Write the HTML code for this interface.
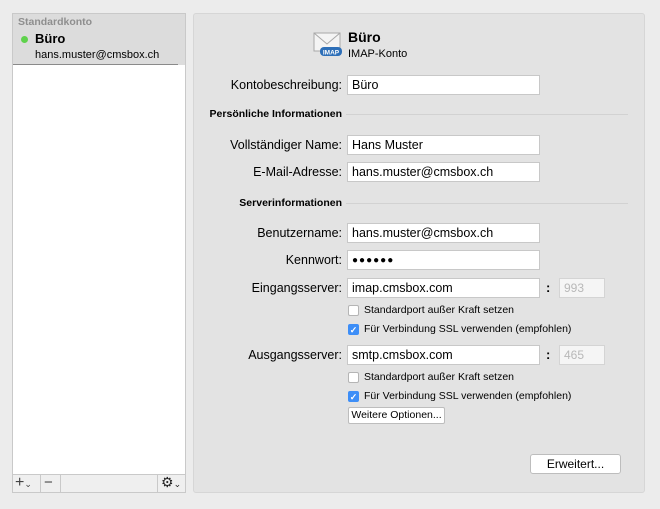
<!DOCTYPE html><html><head><style>
*{box-sizing:border-box;margin:0;padding:0}
body{width:660px;height:509px;background:#ececec;font-family:"Liberation Sans",sans-serif;position:relative;overflow:hidden;color:#000}
.a{position:absolute}
.lbl{position:absolute;right:318px;font-size:12.5px;text-align:right;white-space:nowrap}
.in{position:absolute;left:347px;width:193px;height:20px;background:#fff;border:1px solid #c8c8c8;font-size:12.5px;padding:2px 4px;line-height:15px;white-space:nowrap}
.port{position:absolute;left:559px;width:46px;height:20px;background:#f5f5f5;border:1px solid #d4d4d4;font-size:12px;color:#b8b8b8;padding:2px 4px}
.colon{position:absolute;left:546px;font-size:13px;font-weight:bold}
.sec{position:absolute;font-size:10.5px;font-weight:bold;right:318px;white-space:nowrap}
.line{position:absolute;height:1px;background:#d2d2d2;right:32px}
.cb{position:absolute;left:348px;width:11px;height:11px;border:1px solid #b5b5b5;background:#fff;border-radius:2px}
.cb.on{background:#3d8ef7;border-color:#3d8ef7;color:#fff;font-size:9px;line-height:10px;text-align:center;font-weight:bold}
.ct{position:absolute;left:364px;font-size:10.5px;white-space:nowrap}
.btn{position:absolute;background:#fff;border:1px solid #bdbdbd;border-radius:3px;font-size:11.5px;text-align:center;white-space:nowrap}
</style></head><body>
<div class="a" style="left:12px;top:13px;width:174px;height:480px;background:#fff;border:1px solid #c9c9c9"></div>
<div class="a" style="left:12px;top:13px;width:174px;height:52px;background:#dcdcdc;border:1px solid #c9c9c9;border-bottom:none"></div>
<div class="a" style="left:13px;top:64px;width:165px;height:1px;background:#8a8a8a"></div>
<div class="a" style="left:18px;top:16px;font-size:10.5px;font-weight:bold;color:#8e8e8e">Standardkonto</div>
<div class="a" style="left:21px;top:36px;width:7px;height:7px;border-radius:50%;background:#5fd24c"></div>
<div class="a" style="left:35px;top:31px;font-size:13px;font-weight:bold">Büro</div>
<div class="a" style="left:35px;top:49px;font-size:11px">hans.muster@cmsbox.ch</div>
<div class="a" style="left:12px;top:474px;width:174px;height:19px;background:#efefef;border:1px solid #c9c9c9"></div>
<div class="a" style="left:40px;top:474px;width:1px;height:19px;background:#c9c9c9"></div>
<div class="a" style="left:60px;top:474px;width:1px;height:19px;background:#c9c9c9"></div>
<div class="a" style="left:157px;top:474px;width:1px;height:19px;background:#c9c9c9"></div>
<div class="a" style="left:15px;top:474px;font-size:16px;color:#444">+<span style="font-size:9px">⌄</span></div>
<div class="a" style="left:44px;top:474px;font-size:15px;color:#444">−</div>
<div class="a" style="left:161px;top:474px;font-size:14px;color:#222">⚙<span style="font-size:9px">⌄</span></div>

<div class="a" style="left:193px;top:13px;width:452px;height:480px;background:#e3e3e3;border:1px solid #d6d6d6;border-radius:3px"></div>
<svg class="a" style="left:313px;top:31px" width="30" height="26"><rect x="1" y="2" width="26" height="18" fill="#f4f4f4" stroke="#a8a8a8"/><path d="M1 2 L14 13 L27 2" fill="none" stroke="#a8a8a8"/><rect x="7" y="16" width="22" height="9" rx="4" fill="#2d6fb8"/><text x="18" y="23.5" font-size="6.5" fill="#fff" text-anchor="middle" font-family="Liberation Sans" font-weight="bold">IMAP</text></svg>
<div class="a" style="left:348px;top:29px;font-size:14px;font-weight:bold">Büro</div>
<div class="a" style="left:348px;top:48px;font-size:11px">IMAP-Konto</div>

<div class="lbl" style="top:78px">Kontobeschreibung:</div><div class="in" style="top:75px">Büro</div>
<div class="sec" style="top:108px">Persönliche Informationen</div><div class="line" style="top:114px;left:346px"></div>
<div class="lbl" style="top:138px">Vollständiger Name:</div><div class="in" style="top:135px">Hans Muster</div>
<div class="lbl" style="top:165px">E-Mail-Adresse:</div><div class="in" style="top:162px">hans.muster@cmsbox.ch</div>
<div class="sec" style="top:197px">Serverinformationen</div><div class="line" style="top:203px;left:346px"></div>
<div class="lbl" style="top:226px">Benutzername:</div><div class="in" style="top:223px">hans.muster@cmsbox.ch</div>
<div class="lbl" style="top:253px">Kennwort:</div><div class="in" style="top:250px;font-size:10px;letter-spacing:1px">●●●●●●</div>
<div class="lbl" style="top:281px">Eingangsserver:</div><div class="in" style="top:278px">imap.cmsbox.com</div>
<div class="colon" style="top:280px">:</div><div class="port" style="top:278px">993</div>
<div class="cb" style="top:305px"></div><div class="ct" style="top:304px">Standardport außer Kraft setzen</div>
<div class="cb on" style="top:324px">✓</div><div class="ct" style="top:323px">Für Verbindung SSL verwenden (empfohlen)</div>
<div class="lbl" style="top:348px">Ausgangsserver:</div><div class="in" style="top:345px">smtp.cmsbox.com</div>
<div class="colon" style="top:347px">:</div><div class="port" style="top:345px">465</div>
<div class="cb" style="top:372px"></div><div class="ct" style="top:371px">Standardport außer Kraft setzen</div>
<div class="cb on" style="top:391px">✓</div><div class="ct" style="top:390px">Für Verbindung SSL verwenden (empfohlen)</div>
<div class="btn" style="left:348px;top:407px;width:97px;height:17px;border-radius:2px;line-height:15px;font-size:10.5px">Weitere Optionen...</div>
<div class="btn" style="left:530px;top:454px;width:91px;height:20px;line-height:18px;font-size:12px">Erweitert...</div>
</body></html>
